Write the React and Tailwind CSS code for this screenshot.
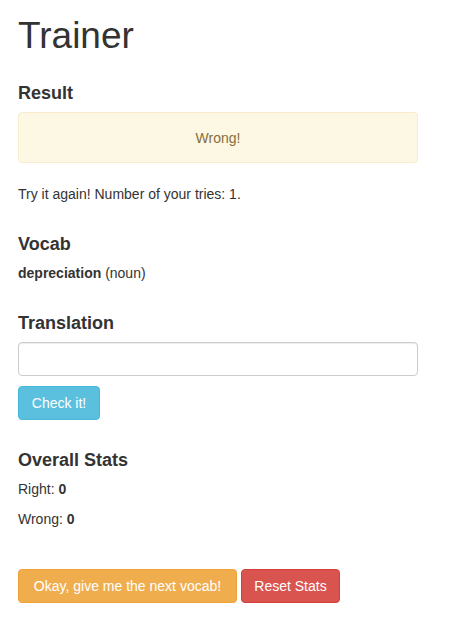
export default function App() {
  return (
    <div
      className="min-h-screen bg-white text-[14px] leading-[20px] text-[#333333]"
      style={{ fontFamily: '"Liberation Sans", Arial, sans-serif' }}
    >
      <div className="w-[400px] ml-[18px] pt-[16px]">

        <h1 className="text-[37px] leading-[40px] font-medium">Trainer</h1>

        <h4 className="mt-[27px] text-[18px] leading-[20px] font-semibold">Result</h4>

        <div className="mt-[9px] h-[51px] flex items-center justify-center rounded border border-[#faebcc] bg-[#fcf8e3] text-[#8a6d3b]">
          Wrong!
        </div>

        <p className="mt-[21px]">Try it again! Number of your tries: 1.</p>

        <h4 className="mt-[30px] text-[18px] leading-[20px] font-semibold">Vocab</h4>

        <p className="mt-[9px]">
          <strong className="font-bold">depreciation</strong> (noun)
        </p>

        <h4 className="mt-[30px] text-[18px] leading-[20px] font-semibold">Translation</h4>

        <input
          type="text"
          className="mt-[9px] block w-full h-[34px] rounded border border-[#cccccc] px-3 shadow-[inset_0_1px_1px_rgba(0,0,0,0.075)] outline-none"
        />

        <button className="mt-[10px] h-[34px] w-[82px] rounded border border-[#46b8da] bg-[#5bc0de] text-white">
          Check it!
        </button>

        <h4 className="mt-[30px] text-[18px] leading-[20px] font-semibold">Overall Stats</h4>

        <p className="mt-[9px]">
          Right: <strong className="font-bold">0</strong>
        </p>

        <p className="mt-[10px]">
          Wrong: <strong className="font-bold">0</strong>
        </p>

        <div className="mt-[40px] flex gap-[4px]">
          <button className="h-[34px] w-[219px] rounded border border-[#eea236] bg-[#f0ad4e] text-white">
            Okay, give me the next vocab!
          </button>
          <button className="h-[34px] w-[99px] rounded border border-[#d43f3a] bg-[#d9534f] text-white">
            Reset Stats
          </button>
        </div>

      </div>
    </div>
  );
}
